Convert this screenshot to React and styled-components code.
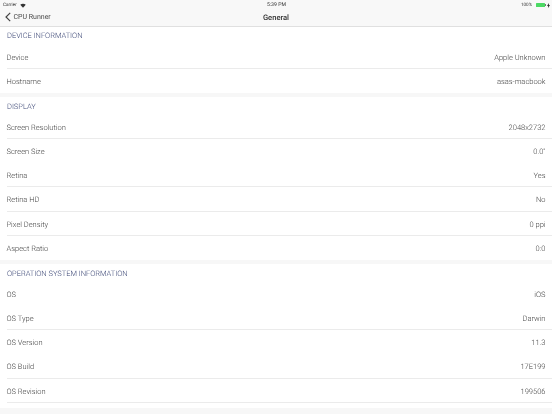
import React from "react";
import styled, { createGlobalStyle } from "styled-components";

const Global = createGlobalStyle`
  html, body {
    margin: 0;
    padding: 0;
    background: #fff;
  }
  body {
    font-family: Roboto, "Liberation Sans", Arial, sans-serif;
    text-rendering: geometricPrecision;
  }
`;

const Page = styled.div`
  width: 552px;
  height: 414px;
  overflow: hidden;
  background: #f7f7f7;
  filter: blur(0.3px);
`;

const TopBar = styled.header`
  height: 26.6px;
  box-sizing: border-box;
  background: #f8f8f8;
  border-bottom: 1px solid #e0e0e0;
  display: flex;
  flex-direction: column;
`;

const StatusBar = styled.div`
  height: 9px;
  box-sizing: border-box;
  padding: 1px 2px 0 3px;
  display: grid;
  grid-template-columns: 1fr auto 1fr;
  align-items: center;
  font-size: 4.6px;
  color: #333;
`;

const StatusLeft = styled.div`
  display: flex;
  align-items: center;
  gap: 3px;
`;

const StatusTime = styled.span`
  font-size: 5.2px;
`;

const StatusRight = styled.div`
  display: flex;
  align-items: center;
  justify-content: flex-end;
  gap: 1px;
`;

const Battery = styled.span`
  display: flex;
  align-items: center;
  gap: 0.5px;
  margin-left: 2.8px;
  &::before {
    content: "";
    width: 9px;
    height: 3.6px;
    background: #4cd964;
    border-radius: 0.6px;
  }
  &::after {
    content: "";
    width: 0.7px;
    height: 1.6px;
    background: #777;
  }
`;

const NavBar = styled.div`
  flex: 1;
  display: grid;
  grid-template-columns: 1fr auto 1fr;
  align-items: center;
  padding: 0 5px;
`;

const Back = styled.div`
  display: flex;
  align-items: center;
  gap: 2.5px;
  font-size: 7px;
  color: #4a4a4a;
`;

const Title = styled.div`
  font-size: 7.6px;
  font-weight: 500;
  color: #333;
`;

const Section = styled.section`
  margin-bottom: 4px;
  padding-bottom: ${(p) => p.$pad || 0}px;
  background: #fff;
`;

const SectionTitle = styled.div`
  height: 17.9px;
  box-sizing: border-box;
  padding: 0.7px 0 0 7px;
  line-height: 17px;
  font-size: 7.5px;
  font-weight: 300;
  letter-spacing: -0.02px;
  color: #3f4a78;
`;

const Row = styled.div`
  height: 24.2px;
  box-sizing: border-box;
  margin-left: 6.5px;
  padding: 2px 6.5px 0 0;
  display: flex;
  align-items: center;
  justify-content: space-between;
  font-size: 7.5px;
  font-weight: 300;
  color: #444;
  border-bottom: 0.6px solid ${(p) => (p.$line ? "#ebebeb" : "transparent")};
`;

const sections = [
  {
    title: "DEVICE INFORMATION",
    rows: [
      ["Device", "Apple Unknown", true],
      ["Hostname", "asas-macbook", false],
    ],
  },
  {
    title: "DISPLAY",
    rows: [
      ["Screen Resolution", "2048x2732", true],
      ["Screen Size", "0.0\"", false],
      ["Retina", "Yes", true],
      ["Retina HD", "No", true],
      ["Pixel Density", "0 ppi", true],
      ["Aspect Ratio", "0:0", false],
    ],
  },
  {
    title: "OPERATION SYSTEM INFORMATION",
    pad: 5.5,
    rows: [
      ["OS", "iOS", false],
      ["OS Type", "Darwin", true],
      ["OS Version", "11.3", false],
      ["OS Build", "17E199", true],
      ["OS Revision", "199506", true],
    ],
  },
];

export default function App() {
  return (
    <Page>
      <Global />
      <TopBar>
        <StatusBar>
          <StatusLeft>
            Carrier
            <svg width="6" height="5" viewBox="0 0 12 10">
              <path d="M6 9.5 0.5 3.5C3.5 0.5 8.5 0.5 11.5 3.5Z" fill="#333" />
            </svg>
          </StatusLeft>
          <StatusTime>5:39 PM</StatusTime>
          <StatusRight>
            100%
            <Battery />
            <svg width="3" height="5" viewBox="0 0 6 10">
              <path d="M4 0 0 6h2.2L2 10l4-6H3.8Z" fill="#333" />
            </svg>
          </StatusRight>
        </StatusBar>
        <NavBar>
          <Back>
            <svg width="6" height="10" viewBox="0 0 6 10">
              <path d="M5.2.8 1 5l4.2 4.2" fill="none" stroke="#444" strokeWidth="1.2" />
            </svg>
            CPU Runner
          </Back>
          <Title>General</Title>
        </NavBar>
      </TopBar>
      {sections.map((s) => (
        <Section key={s.title} $pad={s.pad}>
          <SectionTitle>{s.title}</SectionTitle>
          {s.rows.map(([k, v, line]) => (
            <Row key={k} $line={line}>
              <span>{k}</span>
              <span>{v}</span>
            </Row>
          ))}
        </Section>
      ))}
    </Page>
  );
}
